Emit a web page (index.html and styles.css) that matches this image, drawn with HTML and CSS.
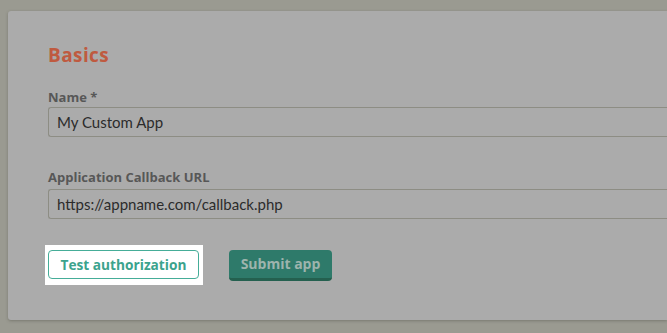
FILE: index.html
```html
<!DOCTYPE html>
<html lang="en">
<head>
<meta charset="utf-8">
<title>Basics</title>
<link rel="stylesheet" href="styles.css">
</head>
<body>
<div class="panel">
  <h2 class="heading">Basics</h2>
  <div class="field">
    <label class="label">Name *</label>
    <div class="input">My Custom App</div>
  </div>
  <div class="field field-gap">
    <label class="label label-2">Application Callback URL</label>
    <div class="input">https://appname.com/callback.php</div>
  </div>
  <div class="actions">
    <div class="highlight">
      <button class="btn-outline">Test authorization</button>
    </div>
    <button class="btn-primary">Submit app</button>
  </div>
</div>
</body>
</html>
```

FILE: styles.css
```css
html, body {
  margin: 0;
  padding: 0;
  height: 100%;
  overflow: hidden;
  background: #9a9a91;
  font-family: "Open Sans", Lato, sans-serif;
}

.panel {
  margin: 11px 0 0 8px;
  height: 309px;
  box-sizing: border-box;
  padding: 32px 0 0 40px;
  background: #ababab;
  border-radius: 3px 0 0 3px;
  box-shadow: 0 1px 3px rgba(60, 60, 50, 0.35);
}

.heading {
  margin: 0 0 22px 0;
  font-size: 19px;
  line-height: 24px;
  font-weight: 700;
  letter-spacing: 0.4px;
  color: #bf5a40;
}

.field {
  display: flex;
  flex-direction: column;
}

.field-gap {
  margin-top: 32px;
}

.label {
  font-size: 13px;
  line-height: 16px;
  font-weight: 700;
  color: #575757;
  margin-bottom: 2px;
}

.label-2 {
  margin-bottom: 4px;
}

.input {
  height: 30px;
  box-sizing: border-box;
  border: 1px solid #8d8d84;
  border-right: none;
  border-radius: 3px 0 0 3px;
  padding: 0 8px;
  font-family: Lato, sans-serif;
  font-size: 15px;
  line-height: 28px;
  color: #2b2b2b;
  background: #ababab;
}

.actions {
  display: flex;
  align-items: center;
  gap: 26px;
  margin-top: 26px;
}

.highlight {
  margin-left: -3px;
  padding: 5px 4px 6px 3px;
  background: #ffffff;
  display: flex;
}

.btn-outline {
  width: 151px;
  height: 29px;
  box-sizing: border-box;
  border: 1.5px solid #45ad98;
  border-radius: 4px;
  background: #ffffff;
  color: #3ba38d;
  font-family: inherit;
  font-size: 13.7px;
  font-weight: 700;
  padding: 0;
}

.btn-primary {
  width: 103px;
  height: 31px;
  box-sizing: border-box;
  border: none;
  border-bottom: 3px solid #24604f;
  border-radius: 4px;
  background: #2e7a6a;
  color: #9db4ad;
  font-family: inherit;
  font-size: 14px;
  font-weight: 700;
  padding: 0;
}
```
